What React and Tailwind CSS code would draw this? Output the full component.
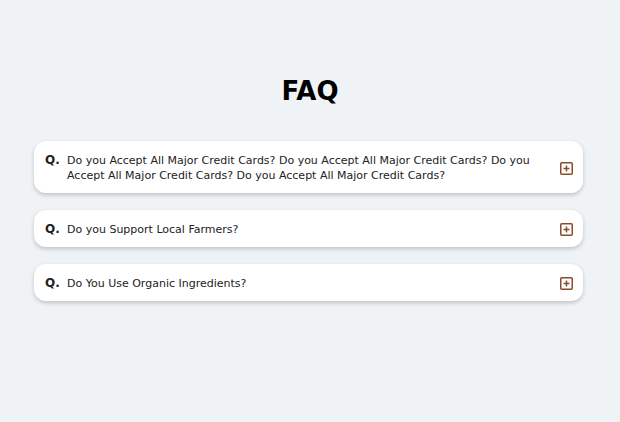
import React from 'react';

const faqs = [
  'Do you Accept All Major Credit Cards? Do you Accept All Major Credit Cards? Do you Accept All Major Credit Cards? Do you Accept All Major Credit Cards?',
  'Do you Support Local Farmers?',
  'Do You Use Organic Ingredients?',
];

function PlusBox() {
  return (
    <svg width="13" height="13" viewBox="0 0 13 13" className="shrink-0">
      <rect x="0.75" y="0.75" width="11.5" height="11.5" rx="1" fill="none" stroke="#8a4b2a" strokeWidth="1.5" />
      <path d="M6.5 3.5v6M3.5 6.5h6" stroke="#8a4b2a" strokeWidth="1.5" />
    </svg>
  );
}

export default function App() {
  return (
    <div className="min-h-screen bg-[#f0f3f6] pt-[76px]" style={{ fontFamily: '"DejaVu Sans", Verdana, sans-serif' }}>
      <h1 className="text-center text-[26px] font-bold text-black leading-[30px]">FAQ</h1>
      <div className="w-[549px] ml-[34px] mt-[35px] flex flex-col gap-[17px]">
        {faqs.map((q, i) => (
          <div key={i} className="bg-white rounded-xl shadow-[0_2px_4px_rgba(0,0,0,0.2)] flex items-center pl-[11px] pr-[10px] pt-[12px] pb-[10px]">
            <span className="self-start text-[12px] font-bold leading-[15px] text-[#222] w-[22px] shrink-0">Q.</span>
            <p className="flex-1 text-[11px] leading-[15px] text-[#222] pr-5">{q}</p>
            <PlusBox />
          </div>
        ))}
      </div>
    </div>
  );
}
